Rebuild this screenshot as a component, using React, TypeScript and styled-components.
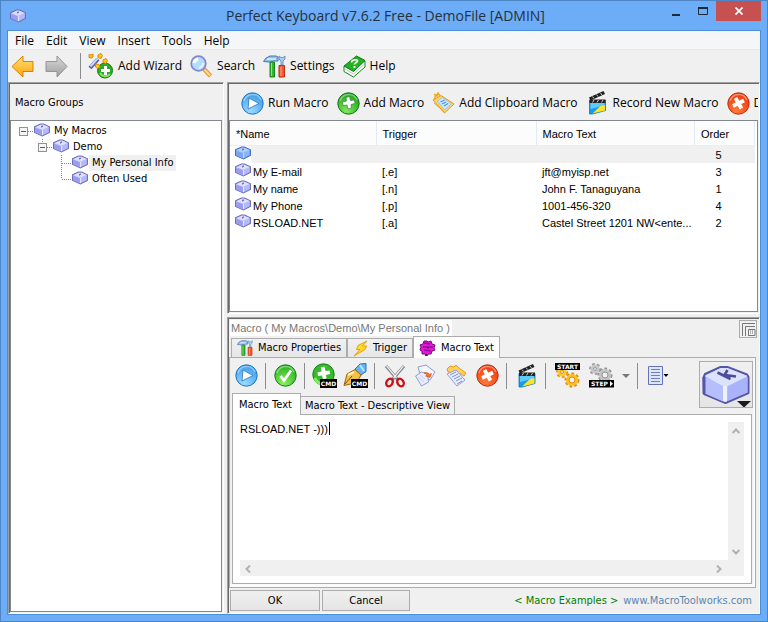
import React from "react";
import styled, { createGlobalStyle, css } from "styled-components";

const ui = `"Open Sans", "Noto Sans", sans-serif`;
const tahoma = `"DejaVu Sans Condensed", "Noto Sans", sans-serif`;
const sans = `"Liberation Sans", Arial, sans-serif`;

const GlobalStyle = createGlobalStyle`
  *, *::before, *::after { box-sizing: border-box; }
  body { margin: 0; background: #6dadf7; }
  button, textarea { font: inherit; color: inherit; }
  button { border: 0; padding: 0; background: none; }
  ul { list-style: none; margin: 0; padding: 0; }
  svg { display: block; flex: none; }
`;

/* ---------- window ---------- */

const Window = styled.div`
  display: flex;
  flex-direction: column;
  min-height: 100vh;
  border: 1px solid #4c84c4;
  background: #6dadf7;
  color: #000;
  font: 12px/16px ${ui};
`;

const TitleBar = styled.header`
  display: grid;
  grid-template-columns: 1fr auto 1fr;
  height: 29px;
  padding: 0 6px 0 9px;
`;

const TitleIcon = styled.span`
  align-self: center;
`;

const Title = styled.h1`
  margin: 0;
  font: 14px/29px ${ui};
  color: #26303c;
  white-space: nowrap;
`;

const Controls = styled.div`
  display: flex;
  justify-content: flex-end;
`;

const Control = styled.button<{ $close?: boolean }>`
  display: flex;
  align-items: center;
  justify-content: center;
  width: ${(p) => (p.$close ? 45 : 27)}px;
  height: 20px;
  background: ${(p) => (p.$close ? "#c75050" : "transparent")};
`;

const Client = styled.main`
  flex: 1;
  display: flex;
  flex-direction: column;
  margin: 0 6px 6px;
  border: 1px solid #4a8edb;
  background: #f0f0f0;
`;

const MenuBar = styled.nav`
  display: flex;
  height: 19px;
  padding-left: 1px;
  background: #f5f6f7;
  border-bottom: 1px solid #e8e8e8;
`;

const MenuItem = styled.button`
  padding: 2px 6px 0;
  line-height: 16px;
`;

/* ---------- toolbars ---------- */

const MainToolbar = styled.div`
  display: flex;
  align-items: center;
  height: 32px;
  padding-left: 3px;
`;

const MacroToolbar = styled.div`
  display: flex;
  align-items: center;
  flex: none;
  height: 36px;
  padding: 2px 0 0 12px;
  overflow: hidden;
`;

const LabelButton = styled.button`
  display: flex;
  flex: none;
  align-items: center;
  gap: 4px;
  margin-right: 8px;
  white-space: nowrap;
`;

const ArrowButton = styled.button`
  width: 34px;
`;

const Separator = styled.span<{ $wide?: boolean }>`
  flex: none;
  width: 1px;
  height: 26px;
  margin: 0 ${(p) => (p.$wide ? 7 : 4)}px 0 ${(p) => (p.$wide ? 1 : 3)}px;
  background: #8c8c8c;
`;

/* ---------- panels ---------- */

const Workspace = styled.div`
  flex: 1;
  display: grid;
  grid-template-columns: 216px minmax(0, 1fr);
  gap: 3px;
`;

const RightColumn = styled.div`
  display: grid;
  grid-template-rows: 232px 1fr;
  gap: 3px;
  min-width: 0;
`;

const Panel = styled.section`
  display: flex;
  flex-direction: column;
  min-width: 0;
  padding: 1px;
  border: 1px solid #fff;
  border-top-color: #a0a0a0;
  border-left-color: #a0a0a0;
  box-shadow: inset 1px 1px #696969;
`;

const PanelHeading = styled.h2`
  height: 36px;
  margin: 0;
  padding-left: 5px;
  font: 11px/37px ${tahoma};
`;

/* ---------- tree ---------- */

const TreeBox = styled.div`
  flex: 1;
  padding: 2px 0 0 4px;
  border: 1px solid #828790;
  background: #fff;
  font: 11px/16px ${tahoma};
`;

const TreeRow = styled.div<{ $level: number }>`
  display: flex;
  height: 16px;
  padding-left: ${(p) => p.$level * 19}px;
`;

const TreeLabel = styled.button<{ $selected?: boolean }>`
  padding: 0 3px;
  margin-left: 1px;
  background: ${(p) => (p.$selected ? "#f0f0f0" : "transparent")};
`;

/* ---------- list ---------- */

const ListBox = styled.div`
  flex: 1;
  padding-right: 2px;
  border: 1px solid #828790;
  background: #fff;
  overflow: hidden;
`;

const MacroTable = styled.table`
  width: 100%;
  table-layout: fixed;
  border-collapse: collapse;
  font: 11px/15px ${sans};
`;

const HeadCell = styled.th<{ $width?: number }>`
  width: ${(p) => (p.$width ? `${p.$width}px` : "auto")};
  height: 24px;
  padding: 3px 6px 0;
  border-right: 1px solid #e2ebf5;
  border-bottom: 1px solid #e8eef5;
  background: #fcfcfd;
  font-weight: 400;
  text-align: left;
`;

const Row = styled.tr<{ $selected?: boolean }>`
  height: 17px;
  ${(p) =>
    p.$selected &&
    css`
      height: 18px;
      td + td,
      td:first-child span { background: #f0f0f0; }
    `}
`;

const Cell = styled.td<{ $number?: boolean }>`
  padding: 2px 0 0 ${(p) => (p.$number ? 21 : 6)}px;
  white-space: nowrap;
  overflow: hidden;
  text-overflow: ellipsis;
`;

const NameCell = styled.td`
  padding: 0 0 0 5px;
`;

const NameFlex = styled.div`
  display: flex;
`;

const NameLabel = styled.span`
  flex: 1;
  min-height: 17px;
  padding: 2px 0 0 2px;
`;

/* ---------- editor ---------- */

const EditorHead = styled.div`
  display: flex;
  align-items: flex-start;
  justify-content: space-between;
  height: 18px;
  padding: 1px 1px 0 1px;
`;

const EditorTitle = styled.h2`
  margin: 0;
  padding: 0 2px 0 1px;
  background: #fff;
  color: #777;
  font: 11px/16px ${sans};
`;

const LayoutButton = styled.button`
  width: 18px;
  height: 18px;
  border: 1px solid #acacac;
`;

const TabStrip = styled.div`
  position: relative;
  display: flex;
  align-items: flex-end;
  height: 20px;
  padding-left: 2px;
  font: 11px/16px ${tahoma};
`;

const Tab = styled.button<{ $active?: boolean }>`
  display: flex;
  align-items: center;
  gap: 5px;
  height: ${(p) => (p.$active ? 22 : 19)}px;
  margin-bottom: ${(p) => (p.$active ? -1 : 0)}px;
  padding: 0 5px;
  border: 1px solid #acacac;
  border-bottom: 0;
  background: ${(p) => (p.$active ? "#fff" : "linear-gradient(#f1f1f1, #e6e6e6)")};
  white-space: nowrap;

  & + & { border-left-width: ${(p) => (p.$active ? 1 : 0)}px; }
`;

const Pane = styled.div`
  flex: 1;
  display: flex;
  flex-direction: column;
  margin-right: 2px;
  padding: 0 2px 3px 1px;
  border: 1px solid #acacac;
  background: #f0f0f0;
  box-shadow: inset -2px -3px #fafafa;
`;

const PaneHead = styled.div`
  display: flex;
  align-items: flex-start;
  justify-content: space-between;
  height: 56px;
`;

const IconBar = styled.div`
  display: flex;
  align-items: center;
  height: 35px;
`;

const IconButton = styled.button<{ $width?: number }>`
  display: flex;
  flex: none;
  align-items: center;
  justify-content: center;
  width: ${(p) => p.$width ?? 31}px;
  height: 30px;
`;

const SubTabs = styled.div`
  display: flex;
  align-items: flex-end;
  height: 21px;
  padding-left: 1px;
  font: 11px/16px ${tahoma};
`;

const SubTab = styled.button<{ $active?: boolean }>`
  position: relative;
  height: ${(p) => (p.$active ? 22 : 18)}px;
  margin-bottom: ${(p) => (p.$active ? -1 : 0)}px;
  padding: 0 ${(p) => (p.$active ? 8 : 4)}px 0 ${(p) => (p.$active ? 6 : 4)}px;
  border: 1px solid #acacac;
  border-left-width: ${(p) => (p.$active ? 1 : 0)}px;
  border-bottom: 0;
  background: ${(p) => (p.$active ? "#fff" : "#f0f0f0")};
  line-height: ${(p) => (p.$active ? 19 : 16)}px;
  white-space: nowrap;
`;

const KeyButton = styled.button`
  display: flex;
  width: 54px;
  height: 47px;
  margin-top: 3px;
  border: 1px solid #acacac;
  background: linear-gradient(#f0f0f0, #e5e5e5);
`;

const Editor = styled.div`
  flex: 1;
  display: grid;
  grid-template-columns: 1fr 16px;
  grid-template-rows: 1fr 16px;
  margin: 0 1px;
  padding: 7px;
  border: 1px solid #acacac;
  background: #fff;
`;

const TextHolder = styled.div`
  position: relative;
  display: flex;
`;

const MacroInput = styled.textarea`
  flex: 1;
  padding: 0;
  border: 0;
  outline: 0;
  resize: none;
  background: transparent;
  overflow: hidden;
  font: 11px/14px ${sans};
  white-space: pre;
`;

const Caret = styled.span`
  position: absolute;
  left: 89px;
  top: 0;
  width: 1px;
  height: 13px;
  background: #000;
`;

const ScrollBar = styled.div<{ $vertical?: boolean }>`
  display: flex;
  justify-content: space-between;
  flex-direction: ${(p) => (p.$vertical ? "column" : "row")};
  grid-column: ${(p) => (p.$vertical ? "2" : "1 / 3")};
  padding-right: ${(p) => (p.$vertical ? 0 : 17)}px;
  background: #f0f0f0;
`;

const ScrollButton = styled.button`
  display: flex;
  align-items: center;
  justify-content: center;
  width: 16px;
  height: 17px;
`;

const Footer = styled.footer`
  display: flex;
  align-items: center;
  gap: 2px;
  height: 24px;
  padding: 1px 6px 0 1px;
  font: 11px/16px ${tahoma};
`;

const PushButton = styled.button<{ $wide?: boolean }>`
  width: ${(p) => (p.$wide ? 90 : 88)}px;
  height: 21px;
  border: 1px solid #acacac;
  background: linear-gradient(#f0f0f0, #e5e5e5);
`;

const FooterLinks = styled.div`
  display: flex;
  gap: 5px;
  margin-left: auto;
`;

const FooterLink = styled.a<{ $green?: boolean }>`
  color: ${(p) => (p.$green ? "#008000" : "#5b86ad")};
  text-decoration: none;
`;

/* ---------- icons ---------- */

const KeyIcon = ({ active }: { active?: boolean }) => (
  <svg width="16" height="14" viewBox="0 0 16 14">
    <path d="M.6 3.8 6.5 1h3l5.900 2.800v5.600L8.400 13 .6 9.400z" fill={active ? "#8ab4f6" : "#b4b9fa"} stroke={active ? "#3c6cc0" : "#6a6db8"} strokeWidth="1.1" />
    <path d="M1.300 4.200 6.700 1.700h2.600l5.300 2.400-6.400 2.600z" fill={active ? "#b0cdfb" : "#dcdffd"} />
    <path d="M1.200 4.700 7.800 7.300v5.100L1.200 9.200z" fill={active ? "#79a6f0" : "#979df0"} />
    <path d="M8.600 7v5.200" stroke={active ? "#c4dafd" : "#e6e8fe"} />
    <path d="m7 3.400 2-.4M7.500 4.400l1-.9" stroke="#54549c" strokeWidth=".9" />
  </svg>
);

const BigKeyIcon = () => (
  <svg width="52" height="45" viewBox="0 0 52 45">
    <path d="M3.500 15.500 5 12 20.500 5h7L47 12.500l1.500 2.500V31L25.500 41 4 32z" fill="#b2bbfb" stroke="#5557a6" strokeWidth="2" strokeLinejoin="round" />
    <path d="M5 14 20.500 6h7L47.500 14 27 24.500h-4z" fill="#dce2fd" />
    <path d="M5 15.500 23 24v15.500L5 31.500z" fill="#b4bffc" />
    <path d="M23 24h4v15.500l-2 .5-2-1z" fill="#eef1ff" />
    <path d="M28 24.500 47.500 15v15.500L28 39z" fill="#a9b3fa" />
    <path d="M4 15v17" stroke="#5557a6" strokeWidth="3" />
    <path d="m17.500 10.500 13 6.500M24 14l3.500-6M25 13l11 1.500" fill="none" stroke="#4c4f95" strokeWidth="2.600" />
    <path d="M37 39h14l-7 6.500z" fill="#1c1c1c" />
  </svg>
);

const Arrow = ({ grey }: { grey?: boolean }) => {
  const id = grey ? "arrow-grey" : "arrow-gold";
  const d = grey ? "M1 6.500h11V1l10 10.500L12 22v-5.500H1z" : "M22 6.500H12V1L1 11.500 12 22v-5.500h10z";
  return (
    <svg width="23" height="23" viewBox="0 0 23 23">
      <linearGradient id={id} x2="0" y2="1">
        <stop stopColor={grey ? "#dadada" : "#ffe082"} />
        <stop offset="1" stopColor={grey ? "#9d9d9d" : "#ffa400"} />
      </linearGradient>
      <path d={d} fill={`url(#${id})`} stroke={grey ? "#949494" : "#d98200"} strokeLinejoin="round" />
    </svg>
  );
};

type Ball = "run" | "check" | "add" | "stop";
const ballColors: Record<Ball, [string, string, string]> = {
  run: ["#9ddbff", "#3a9aea", "#2575bd"],
  check: ["#8cf060", "#25ae1f", "#128016"],
  add: ["#84e660", "#1da01c", "#0d7614"],
  stop: ["#ff7a3a", "#ee3a0c", "#c02c0b"],
};

const BallIcon = ({ kind }: { kind: Ball }) => {
  const [light, deep, edge] = ballColors[kind];
  return (
    <svg width="23" height="23" viewBox="0 0 23 23">
      <radialGradient id={`ball-${kind}`} cx=".4" cy=".85" r=".85">
        <stop stopColor={light} />
        <stop offset="1" stopColor={deep} />
      </radialGradient>
      <circle cx="11.500" cy="11.500" r="10.700" fill={`url(#ball-${kind})`} stroke={edge} />
      <path d="M3 9a9 9 0 0 1 17-1" fill="none" stroke="#fff" strokeOpacity=".4" strokeWidth="1.500" />
      {kind === "run" && <path d="m8 6 10 5.500L7 17z" fill="#fff" stroke="#2472b8" strokeWidth=".8" />}
      {kind === "check" && <path d="m6.500 12 3.500 4.500 7-10" fill="none" stroke="#fff" strokeWidth="2.800" />}
      {kind === "add" && (
        <path d="m9 5.500 3.500-1 1 4 4-.5.500 3.500-4 1 .500 3.500-3.500 1-1-4-4 .5-.5-3.500 4-1z" fill="#fff" stroke="#0f7d16" strokeWidth=".6" />
      )}
      {kind === "stop" && <path d="m8.500 6 6 10.500M17 8.500l-11 5.500" fill="none" stroke="#fff" strokeWidth="3.800" />}
    </svg>
  );
};

const Cmd = () => (
  <>
    <path d="M8 16h17v9H8z" fill="#000" />
    <text x="16.500" y="23" fill="#fff" fontFamily="DejaVu Sans" fontSize="6" fontWeight="700" textAnchor="middle">CMD</text>
  </>
);

const AddCmdIcon = () => (
  <svg width="25" height="25" viewBox="0 0 25 25">
    <circle cx="11.500" cy="11.500" r="10.700" fill="#38b92e" stroke="#128016" />
    <path d="M3 15a9 9 0 0 0 16 2" fill="none" stroke="#86ea62" strokeWidth="3" />
    <path d="m9 4.500 3.500-1 1 4.500 4-.5.500 3.500-4 1 .500 3.500-3.500 1-1-4-4 .5-.5-3.500 4-1z" fill="#fff" />
    <Cmd />
  </svg>
);

const PenCmdIcon = () => (
  <svg width="25" height="25" viewBox="0 0 25 25">
    <path d="m12 6 5-5 6-.5v8L18 12z" fill="#65b5f2" stroke="#2274b8" />
    <path d="m17 2 4 6" stroke="#bfe2ff" strokeWidth="2" />
    <path d="M1 22.500 4 11l8-4.500 6 5.500-4 7.500z" fill="#f4c14b" stroke="#9c6410" />
    <path d="m2 21 7-8" stroke="#7c4a0c" />
    <path d="m5 12 6-3" stroke="#fff3b8" strokeWidth="2" />
    <Cmd />
  </svg>
);

const WizardIcon = () => (
  <svg width="26" height="26" viewBox="0 0 26 26">
    <path d="m2 15 8-9" stroke="#5260a8" strokeWidth="4" />
    <path d="m2.500 13.500 7-8" stroke="#cbd6fa" strokeWidth="2" />
    <circle cx="17" cy="17.500" r="7.500" fill="#2bab28" stroke="#127c16" />
    <path d="M12 20a6 6 0 0 0 10 1" fill="none" stroke="#85e362" strokeWidth="2" />
    <path d="M17.500 13v9M13 17.500h9" stroke="#fff" strokeWidth="3" />
    <path d="m1 1.500 2 .5 2-1v3l-2 1-2-.5zM10 2l3-1.500 1.500 2-1.500 3-3-1zM15 7l3-1.500 1.500 2-1.500 3-3-1zM7.500 11l3.500.5 1 2.500-2.500 1.500-2-1.500z" fill="#ffc61a" stroke="#df8b00" />
  </svg>
);

const SearchIcon = () => (
  <svg width="23" height="23" viewBox="0 0 23 23">
    <path d="m14 14 6.500 7" stroke="#e49a35" strokeWidth="4.500" />
    <path d="m14.500 14.500 5.500 6" stroke="#ffd888" strokeWidth="2" />
    <circle cx="8.500" cy="8.500" r="7.300" fill="#b4dcff" stroke="#8585cf" strokeWidth="1.700" />
    <path d="M4 8a5 5 0 0 1 4-4" fill="none" stroke="#fff" strokeWidth="3" />
    <path d="M13 8a5 5 0 0 1-4 5" fill="none" stroke="#e6f6ff" strokeWidth="2" />
  </svg>
);

const ToolsIcon = ({ size = 23 }: { size?: number }) => (
  <svg width={size} height={size} viewBox="0 0 23 23">
    <path d="M7 7h4.500v15H7z" fill="#35b52e" stroke="#16861a" />
    <path d="M8.500 8v13" stroke="#8ce676" />
    <path d="M.5 6.500 3 3l4-2h6l2 1v4H11L6 7z" fill="#8ec0ee" stroke="#4578b0" />
    <path d="M4 4h9" stroke="#dcf0ff" strokeWidth="1.500" />
    <path d="M16 10.500h5.500V22H16z" fill="#f05a2c" stroke="#b92a12" />
    <path d="M18 12v9" stroke="#ffad8c" />
    <path d="M18 10V6l-2-2V1l2 1.500h2L22 1v3l-2 2v4z" fill="#a8cdf0" stroke="#5687ba" strokeWidth=".8" />
  </svg>
);

const BookIcon = () => (
  <svg width="23" height="23" viewBox="0 0 23 23">
    <path d="M1 11v5.500L10.500 22 22 12V6z" fill="#fff" stroke="#16831b" />
    <path d="M1 11 13.500 1 22 5.500 10.500 16.500z" fill="#22b21f" stroke="#0c7614" strokeLinejoin="round" />
    <path d="M2 14 10.500 19 21 9.500" fill="none" stroke="#b5cbb5" />
    <path d="M8.500 7.500c0-3 6-3.500 6-1.500 0 1.500-3 1.500-3 3.500M10.500 12h2" fill="none" stroke="#e9ffe0" strokeWidth="1.800" />
  </svg>
);

const ClipIcon = () => (
  <svg width="23" height="23" viewBox="0 0 23 23">
    <path d="M1 8 9 3.500 22 12 12.500 21z" fill="#ffd562" stroke="#e09d1d" />
    <path d="m5.500 9 5-3.500 8.500 6.500-6.500 6z" fill="#cfe9ff" stroke="#9fc4ea" />
    <path d="m8.500 10 4-2M10 12l4-2M12 14l4-2.500" stroke="#4a94de" strokeWidth="1.200" />
    <path d="m2 2 3 2 1-3 2 3M2 8l2-6" fill="none" stroke="#eda91e" strokeWidth="1.500" />
    <path d="m2 11 10.500 9" stroke="#f09b13" />
  </svg>
);

const ClapIcon = ({ width = 20 }: { width?: number }) => (
  <svg width={width} height="24" viewBox="0 0 20 24">
    <path d="M2 9.500h16v10L5 23H2z" fill="#159cec" stroke="#0876bd" strokeWidth=".8" />
    <path d="M3 10.500h14v4L3 18z" fill="#5ecbff" />
    <path d="M5 22.500 13 15l4.500-1v5.500z" fill="#ffe228" />
    <path d="M1.500 6.500 16 0l1.500 3L3 9.500z" fill="#222" />
    <path d="M2 8.500h16v3.500H2z" fill="#222" />
    <path d="m5 5.500 1.500 2M9 3.500l1.500 2M13 2l1.500 2M5 11.500l1.500-2.500M9.500 11.500 11 9M14 11.500l1.500-2.500" stroke="#ccc" strokeWidth="1" />
  </svg>
);

const BoltIcon = () => (
  <svg width="15" height="17" viewBox="0 0 15 17">
    <path d="M14 1 5 5.500 3.500 9.500H7L1 16l11-6.500L13.500 6h-4z" fill="#ffd92e" stroke="#f0a000" />
  </svg>
);

const FlowerIcon = () => (
  <svg width="17" height="16" viewBox="0 0 17 16">
    <path d="M5 1h3l1 1 3-1 1 3 3 1-1 3 1 2-3 1-1 3H9l-1 2-2-2H3l0-3-2-1 1-3-1-2 3-1z" fill="#e21bd8" stroke="#7d087e" />
    <path d="m5 3 6 1M4 7h4M10 7h4M5 10l7 1" stroke="#a006a4" strokeWidth="1.500" />
    <path d="M7 14v2M9 6.500v2" stroke="#3b063c" strokeWidth="1.500" />
  </svg>
);

const ScissorsIcon = () => (
  <svg width="22" height="24" viewBox="0 0 22 24">
    <path d="m2 2 12 14M20 2 8 16" stroke="#7b7f86" strokeWidth="3" />
    <path d="m2.500 2 10 12M19.500 2l-10 12" stroke="#f0f2f5" strokeWidth="1.200" />
    <ellipse cx="5.500" cy="18.500" rx="3" ry="4" transform="rotate(30 5.500 18.500)" fill="none" stroke="#c81216" strokeWidth="2.400" />
    <ellipse cx="16.500" cy="18.500" rx="3" ry="4" transform="rotate(-30 16.500 18.500)" fill="none" stroke="#c81216" strokeWidth="2.400" />
  </svg>
);

const CopyIcon = () => (
  <svg width="23" height="23" viewBox="0 0 23 23">
    <path d="m4 3 8-2 9 7-5 8-9-3z" fill="#f3f6ff" stroke="#8e9cd4" />
    <path d="m1.500 12 6-4 6 2 1 8-7 4z" fill="#e7edff" stroke="#8e9cd4" />
    <path d="m4 13 6 5M6 11l5 4" stroke="#c4cef2" />
    <path d="M10 9c3-1 5 0 5 1.500l2.500-1-1.500 4-4.500-1.500 1.500-.5c0-1.500-1.500-2-3-2.500z" fill="#ff7022" stroke="#d64a10" strokeWidth=".6" />
  </svg>
);

const PasteIcon = () => (
  <svg width="23" height="23" viewBox="0 0 23 23">
    <path d="M2 5 5 2l4 1 2-2 3 3 7 5-2 3-3-2L3 8z" fill="#ffcf5a" stroke="#e79b1c" />
    <path d="m2 10 9-4 9 10-8 6z" fill="#e7eeff" stroke="#92a0d6" />
    <path d="m5 11 6-3M7 13l6-3M9 15l6-3M11 17l6-3M12 20l5-3" stroke="#7b90d4" />
  </svg>
);

const Gear = ({ x, y, r, fill, edge }: { x: number; y: number; r: number; fill: string; edge: string }) => (
  <g fill="none">
    <circle cx={x} cy={y} r={r} stroke={edge} strokeWidth="3" strokeDasharray="2.500 2" />
    <circle cx={x} cy={y} r={r - 1.5} stroke={fill} strokeWidth="3" />
    <circle cx={x} cy={y} r={r - 3} stroke={edge} strokeWidth="1" />
  </g>
);

const StartIcon = () => (
  <svg width="25" height="25" viewBox="0 0 25 25">
    <Gear x={7} y={9} r={4.5} fill="#ffc834" edge="#dc9312" />
    <Gear x={17} y={17} r={6} fill="#ffc01f" edge="#dc8b0a" />
    <path d="M0 0h25v7H0z" fill="#000" />
    <text x="12.500" y="6" fill="#fff" fontFamily="DejaVu Sans" fontSize="6" fontWeight="700" textAnchor="middle">START</text>
  </svg>
);

const StepIcon = () => (
  <svg width="25" height="25" viewBox="0 0 25 25">
    <Gear x={6} y={6} r={4.5} fill="#c8c8c8" edge="#9a9a9a" />
    <Gear x={16} y={12} r={6} fill="#c4c4c4" edge="#929292" />
    <path d="M0 17h25v7.500H0z" fill="#000" />
    <text x="10.500" y="23" fill="#fff" fontFamily="DejaVu Sans" fontSize="6" fontWeight="700" textAnchor="middle">STEP</text>
    <path d="m21 18 3 2.700-3 2.700z" fill="#fff" />
  </svg>
);

const ListIcon = () => (
  <svg width="22" height="20" viewBox="0 0 22 20">
    <path d="M.5.5h14v18H.5z" fill="#dde5fb" stroke="#6674b4" />
    <path d="M3 3.500h9M3 6.500h9M3 9.500h9M3 12.500h9M3 15.500h9" stroke="#6a7ec4" />
    <path d="M15.500 8h5L18 11z" fill="#000" />
  </svg>
);

const DropIcon = () => (
  <svg width="8" height="4" viewBox="0 0 8 4"><path d="M0 0h8L4 4z" fill="#777" /></svg>
);

const LayoutIcon = () => (
  <svg width="16" height="16" viewBox="0 0 16 16" fill="none" stroke="#777">
    <path d="M2.500 15V2.500H15M5.500 15V5.500H15M8.500 15V8.500H15V14.500H8.500" />
    <path d="M10 10h4M10 12h4" strokeDasharray="1 1" />
  </svg>
);

const Chevron = ({ turn }: { turn: number }) => (
  <svg width="8" height="8" viewBox="0 0 8 8">
    <path d="m.6 6 3.400-3.500L7.400 6" transform={`rotate(${turn} 4 4)`} fill="none" stroke="#b0b0b0" strokeWidth="2" />
  </svg>
);

const Branch = ({ expander, more }: { expander?: boolean; more?: boolean }) => (
  <svg width="19" height="16" viewBox="0 0 19 16" shapeRendering="crispEdges" fill="none">
    <path d="M9 8.500h10" stroke="#888" strokeDasharray="1 1" />
    {(!expander || more) && <path d={`M8.500 0v${more && !expander ? 16 : 8}`} stroke="#888" strokeDasharray="1 1" />}
    {expander && (
      <>
        <path d="M4.500 4.500h8v8h-8z" fill="#f6f6f6" stroke="#919191" />
        <path d="M6 8.500h5" stroke="#3c5aa8" />
      </>
    )}
  </svg>
);

/* ---------- data ---------- */

const menus = ["File", "Edit", "View", "Insert", "Tools", "Help"];

const mainActions = [
  { label: "Add Wizard", icon: <WizardIcon /> },
  { label: "Search", icon: <SearchIcon /> },
  { label: "Settings", icon: <ToolsIcon /> },
  { label: "Help", icon: <BookIcon /> },
];

const macroActions = [
  { label: "Run Macro", icon: <BallIcon kind="run" /> },
  { label: "Add Macro", icon: <BallIcon kind="add" /> },
  { label: "Add Clipboard Macro", icon: <ClipIcon /> },
  { label: "Record New Macro", icon: <ClapIcon width={23} /> },
  { label: "Delete Macro", icon: <BallIcon kind="stop" /> },
];

const macros = [
  { name: "", trigger: "", text: "", order: 5 },
  { name: "My E-mail", trigger: "[.e]", text: "jft@myisp.net", order: 3 },
  { name: "My name", trigger: "[.n]", text: "John F. Tanaguyana", order: 1 },
  { name: "My Phone", trigger: "[.p]", text: "1001-456-320", order: 4 },
  { name: "RSLOAD.NET", trigger: "[.a]", text: "Castel Street 1201 NW<ente...", order: 2 },
];

export default function App() {
  return (
    <>
      <GlobalStyle />
      <Window>
        <TitleBar>
          <TitleIcon><KeyIcon /></TitleIcon>
          <Title>Perfect Keyboard v7.6.2 Free - DemoFile [ADMIN]</Title>
          <Controls>
            <Control aria-label="Minimize">
              <svg width="8" height="12" viewBox="0 0 8 12"><path d="M0 9h8v2H0z" fill="#1e2a38" /></svg>
            </Control>
            <Control aria-label="Maximize">
              <svg width="10" height="8" viewBox="0 0 10 8"><path d="M.5 1h9v6.500h-9z" fill="none" stroke="#1e2a38" /><path d="M0 1h10" stroke="#1e2a38" strokeWidth="2" /></svg>
            </Control>
            <Control $close aria-label="Close">
              <svg width="8" height="8" viewBox="0 0 8 8"><path d="m.5.5 7 7m0-7-7 7" stroke="#fff" strokeWidth="1.700" /></svg>
            </Control>
          </Controls>
        </TitleBar>
        <Client>
          <MenuBar>
            {menus.map((m) => <MenuItem key={m}>{m}</MenuItem>)}
          </MenuBar>
          <MainToolbar>
            <ArrowButton aria-label="Back"><Arrow /></ArrowButton>
            <ArrowButton aria-label="Forward"><Arrow grey /></ArrowButton>
            <Separator $wide />
            {mainActions.map((a) => (
              <LabelButton key={a.label}>{a.icon}{a.label}</LabelButton>
            ))}
          </MainToolbar>
          <Workspace>
            <Panel>
              <PanelHeading>Macro Groups</PanelHeading>
              <TreeBox>
                <ul>
                  <li>
                    <TreeRow $level={0}><Branch expander /><KeyIcon /><TreeLabel>My Macros</TreeLabel></TreeRow>
                    <ul>
                      <li>
                        <TreeRow $level={1}><Branch expander more /><KeyIcon /><TreeLabel>Demo</TreeLabel></TreeRow>
                        <ul>
                          <li><TreeRow $level={2}><Branch more /><KeyIcon /><TreeLabel $selected>My Personal Info</TreeLabel></TreeRow></li>
                          <li><TreeRow $level={2}><Branch /><KeyIcon /><TreeLabel>Often Used</TreeLabel></TreeRow></li>
                        </ul>
                      </li>
                    </ul>
                  </li>
                </ul>
              </TreeBox>
            </Panel>
            <RightColumn>
              <Panel>
                <MacroToolbar>
                  {macroActions.map((a) => (
                    <LabelButton key={a.label}>{a.icon}{a.label}</LabelButton>
                  ))}
                </MacroToolbar>
                <ListBox>
                  <MacroTable>
                    <thead>
                      <tr>
                        <HeadCell $width={146}>*Name</HeadCell>
                        <HeadCell $width={160}>Trigger</HeadCell>
                        <HeadCell>Macro Text</HeadCell>
                        <HeadCell $width={60}>Order</HeadCell>
                      </tr>
                    </thead>
                    <tbody>
                      {macros.map((m, i) => (
                        <Row key={m.order} $selected={i === 0}>
                          <NameCell><NameFlex><KeyIcon active={i === 0} /><NameLabel>{m.name}</NameLabel></NameFlex></NameCell>
                          <Cell>{m.trigger}</Cell>
                          <Cell>{m.text}</Cell>
                          <Cell $number>{m.order}</Cell>
                        </Row>
                      ))}
                    </tbody>
                  </MacroTable>
                </ListBox>
              </Panel>
              <Panel>
                <EditorHead>
                  <EditorTitle>Macro ( My Macros\Demo\My Personal Info )</EditorTitle>
                  <LayoutButton aria-label="Layout"><LayoutIcon /></LayoutButton>
                </EditorHead>
                <TabStrip role="tablist">
                  <Tab role="tab"><ToolsIcon size={16} />Macro Properties</Tab>
                  <Tab role="tab"><BoltIcon />Trigger</Tab>
                  <Tab role="tab" $active aria-selected><FlowerIcon />Macro Text</Tab>
                </TabStrip>
                <Pane>
                  <PaneHead>
                    <div>
                      <IconBar>
                        <IconButton aria-label="Run"><BallIcon kind="run" /></IconButton>
                        <Separator />
                        <IconButton aria-label="Apply"><BallIcon kind="check" /></IconButton>
                        <Separator />
                        <IconButton aria-label="Add command"><AddCmdIcon /></IconButton>
                        <IconButton aria-label="Edit command"><PenCmdIcon /></IconButton>
                        <Separator />
                        <IconButton aria-label="Cut"><ScissorsIcon /></IconButton>
                        <IconButton aria-label="Copy"><CopyIcon /></IconButton>
                        <IconButton aria-label="Paste"><PasteIcon /></IconButton>
                        <IconButton aria-label="Delete"><BallIcon kind="stop" /></IconButton>
                        <Separator />
                        <IconButton aria-label="Record"><ClapIcon /></IconButton>
                        <Separator />
                        <IconButton $width={34} aria-label="Start"><StartIcon /></IconButton>
                        <IconButton $width={34} aria-label="Step"><StepIcon /></IconButton>
                        <IconButton $width={16} aria-label="Step options"><DropIcon /></IconButton>
                        <Separator />
                        <IconButton $width={34} aria-label="View"><ListIcon /></IconButton>
                      </IconBar>
                      <SubTabs role="tablist">
                        <SubTab role="tab" $active aria-selected>Macro Text</SubTab>
                        <SubTab role="tab">Macro Text - Descriptive View</SubTab>
                      </SubTabs>
                    </div>
                    <KeyButton aria-label="Keys"><BigKeyIcon /></KeyButton>
                  </PaneHead>
                  <Editor>
                    <TextHolder>
                      <MacroInput aria-label="Macro text" defaultValue="RSLOAD.NET -)))" />
                      <Caret />
                    </TextHolder>
                    <ScrollBar $vertical>
                      <ScrollButton aria-label="Scroll up"><Chevron turn={0} /></ScrollButton>
                      <ScrollButton aria-label="Scroll down"><Chevron turn={180} /></ScrollButton>
                    </ScrollBar>
                    <ScrollBar>
                      <ScrollButton aria-label="Scroll left"><Chevron turn={270} /></ScrollButton>
                      <ScrollButton aria-label="Scroll right"><Chevron turn={90} /></ScrollButton>
                    </ScrollBar>
                  </Editor>
                </Pane>
                <Footer>
                  <PushButton $wide>OK</PushButton>
                  <PushButton>Cancel</PushButton>
                  <FooterLinks>
                    <FooterLink $green href="#examples">&lt; Macro Examples &gt;</FooterLink>
                    <FooterLink href="#site">www.MacroToolworks.com</FooterLink>
                  </FooterLinks>
                </Footer>
              </Panel>
            </RightColumn>
          </Workspace>
        </Client>
      </Window>
    </>
  );
}
